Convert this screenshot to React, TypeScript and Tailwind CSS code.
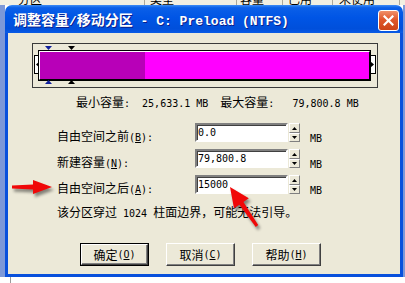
import React from "react";

const CJK = /[\u2E80-\u9FFF\u3000-\u303F\uFF00-\uFFEF]/;

// split a string into CJK / latin runs so each can get its own font and size
const Mixed = ({ text, title }: { text: string; title?: boolean }) => {
  const runs: { s: string; c: boolean }[] = [];
  for (const ch of text) {
    const c = CJK.test(ch);
    const last = runs[runs.length - 1];
    if (last && last.c === c) last.s += ch;
    else runs.push({ s: ch, c });
  }
  return (
    <>
      {runs.map((r, i) => (
        <span
          key={i}
          className={
            r.c
              ? title
                ? "font-['Noto_Sans_CJK_SC',sans-serif] text-[14px]"
                : "font-['Noto_Sans_CJK_SC',sans-serif] text-[12px]"
              : title
                ? "font-['Liberation_Mono',monospace] text-[13px]"
                : "font-['DejaVu_Sans_Mono',monospace] text-[10px]"
          }
        >
          {r.s}
        </span>
      ))}
    </>
  );
};

const Acc = ({ k }: { k: string }) => (
  <span className="font-['DejaVu_Sans_Mono',monospace] text-[10px]">
    (<u>{k}</u>)
  </span>
);

const Marker = ({ color, up }: { color: string; up?: boolean }) => (
  <svg width="7" height="4" viewBox="0 0 7 4">
    <polygon points={up ? "3.5,0 7,4 0,4" : "0,0 7,0 3.5,4"} fill={color} />
  </svg>
);

const Spinner = () => (
  <div className="ml-[1px] flex w-[11px] flex-col">
    <div className="flex h-[10px] items-center justify-center border border-t-white border-l-white border-b-[#808080] border-r-[#808080] bg-[#ECE9D8]">
      <svg width="5" height="3" viewBox="0 0 5 3">
        <polygon points="2.5,0 5,3 0,3" fill="#000" />
      </svg>
    </div>
    <div className="flex h-[9px] items-center justify-center border border-t-white border-l-white border-b-[#808080] border-r-[#808080] bg-[#ECE9D8]">
      <svg width="5" height="3" viewBox="0 0 5 3">
        <polygon points="0,0 5,0 2.5,3" fill="#000" />
      </svg>
    </div>
  </div>
);

const Row = ({ label, acc, value }: { label: string; acc: string; value: string }) => (
  <div className="flex h-[19px] items-start pl-[49px]">
    <div className="mt-[6px] w-[138px] leading-[12px] whitespace-pre">
      <Mixed text={label} />
      <Acc k={acc} />
      <Mixed text=":" />
    </div>
    <div className="flex h-[19px] w-[93px] items-center border-2 border-t-[#808080] border-l-[#808080] border-b-white border-r-white bg-white pl-[1px] shadow-[inset_1px_1px_0_#404040] leading-[12px]">
      <Mixed text={value} />
    </div>
    <Spinner />
    <div className="mt-[7px] ml-[10px] leading-[12px]">
      <Mixed text="MB" />
    </div>
  </div>
);

const Btn = ({ label, acc, def }: { label: string; acc: string; def?: boolean }) => (
  <div className={def ? "h-[23px] w-[69px] border border-black" : "h-[23px] w-[69px]"}>
    <div className="flex h-full w-full items-center justify-center border border-t-white border-l-white border-b-[#404040] border-r-[#404040] bg-[#ECE9D8] leading-[12px] shadow-[inset_-1px_-1px_0_#808080]">
      <Mixed text={label} />
      <Acc k={acc} />
    </div>
  </div>
);

const headers = [
  { t: "分区", w: "w-[145px]", p: "pl-[18px]" },
  { t: "类型", w: "w-[92px]", p: "pl-[5px]" },
  { t: "容量", w: "w-[46px]", p: "pl-[3px]" },
  { t: "已用", w: "w-[50px]", p: "pl-[5px]" },
  { t: "未使用", w: "w-[67px]", p: "pl-[6px]" },
];

export default function App() {
  return (
    <div className="relative flex h-[283px] w-[405px] flex-col overflow-hidden bg-white text-black">
      {/* list header of the window behind */}
      <div className="flex h-[5px] overflow-hidden bg-[#F1EFE2]">
        {headers.map((h) => (
          <div key={h.t} className={`${h.w} ${h.p} shrink-0 border-r border-[#ACA899]`}>
            <div className="-mt-[8px] leading-[12px]">
              <Mixed text={h.t} />
            </div>
          </div>
        ))}
      </div>

      <div className="flex h-[272px]">
        <div className="w-[5px] bg-[#7C98D8]" />

        {/* dialog */}
        <div className="flex w-[398px] flex-col">
          <div className="flex h-[28px] items-start justify-between rounded-t-[7px] bg-[linear-gradient(to_bottom,#3d8cf5_0%,#0a5fe8_10%,#0055e5_45%,#004fdb_85%,#0a5ce6_100%)] pl-[8px] pr-[4px]">
            <div className="mt-[7px] font-bold leading-[15px] whitespace-pre text-white [text-shadow:1px_1px_#0a1e8c]">
              <Mixed title text="调整容量/移动分区 - C: Preload (NTFS)" />
            </div>
            <div className="mt-[5px] flex h-[21px] w-[21px] items-center justify-center rounded-[3px] border border-white bg-[linear-gradient(to_bottom,#f0906a_0%,#e0582c_45%,#cc4418_100%)]">
              <svg width="11" height="11" viewBox="0 0 11 11">
                <path d="M1.5 1.5 L9.5 9.5 M9.5 1.5 L1.5 9.5" stroke="#fff" strokeWidth="2.2" strokeLinecap="square" />
              </svg>
            </div>
          </div>

          <div className="flex h-[244px] flex-col border-x-[3px] border-b-[3px] border-[#0850DC] bg-[#ECE9D8]">
            {/* partition map */}
            <div className="relative mt-[10px] ml-[24px] flex h-[45px] w-[346px] items-center border border-[#3a3a3a] pl-[5px]">
              <div className="absolute top-[11px] left-[1px] flex h-[19px] w-[7px] items-center border border-black bg-white pl-[1px]">
                <svg width="4" height="7" viewBox="0 0 4 7">
                  <polygon points="4,0 4,7 0,3.5" fill="#000" />
                </svg>
              </div>
              <div className="absolute top-[11px] right-[1px] flex h-[19px] w-[7px] items-center justify-end border border-black bg-white pr-[1px]">
                <svg width="4" height="7" viewBox="0 0 4 7">
                  <polygon points="0,0 0,7 4,3.5" fill="#000" />
                </svg>
              </div>
              <div className="relative h-[31px] w-[333px] border border-black">
                <div className="flex h-full w-full border-t border-l border-t-white border-l-white border-b border-r border-b-black border-r-black">
                  <div className="w-[105px] bg-[#B800B8]" />
                  <div className="flex-1 bg-[#FF00FF]" />
                </div>
              </div>
              <div className="absolute top-[2px] left-[12px] flex">
                <Marker color="#10209C" />
              </div>
              <div className="absolute top-[2px] left-[35px] flex">
                <Marker color="#000" />
              </div>
              <div className="absolute bottom-[3px] left-[12px] flex">
                <Marker color="#10209C" up />
              </div>
              <div className="absolute bottom-[3px] left-[35px] flex">
                <Marker color="#000" up />
              </div>
            </div>

            <div className="mt-[7px] h-[12px] pl-[68px] leading-[12px] whitespace-pre">
              <Mixed text="最小容量:  25,633.1 MB  最大容量:   79,800.8 MB" />
            </div>

            <div className="mt-[16px] flex flex-col gap-[7px]">
              <Row label="自由空间之前" acc="B" value="0.0" />
              <Row label="新建容量" acc="N" value="79,800.8" />
              <Row label="自由空间之后" acc="A" value="15000" />
            </div>

            <div className="mt-[11px] h-[12px] pl-[49px] leading-[12px] whitespace-pre">
              <Mixed text="该分区穿过 1024 柱面边界，可能无法引导。" />
            </div>

            <div className="mt-[26px] flex gap-[17px] pl-[72px]">
              <Btn label="确定" acc="O" def />
              <Btn label="取消" acc="C" />
              <Btn label="帮助" acc="H" />
            </div>
          </div>
        </div>

        <div className="w-[2px] bg-[#7C98D8]" />
      </div>

      <div className="flex h-[6px] bg-white pl-[10px]">
        <div className="w-[1px] bg-[#9a9a9a]" />
      </div>

      {/* red annotation arrows */}
      <svg
        className="absolute top-[178px] left-[9px] drop-shadow-[2px_3px_1.5px_rgba(0,0,0,0.45)]"
        width="46"
        height="18"
        viewBox="0 0 46 18"
      >
        <polygon points="3,7.5 24,6.5 24,2 43,9 24,16 24,11.5 3,10.5" fill="#F00808" />
      </svg>
      <svg
        className="absolute top-[182px] left-[222px] drop-shadow-[2px_3px_1.5px_rgba(0,0,0,0.45)]"
        width="44"
        height="50"
        viewBox="0 0 44 50"
      >
        <polygon
          points="8,5 26.8,16.3 21.45,20 36.2,43 33.8,45 17.35,22.8 12,26.5"
          fill="#F00808"
        />
      </svg>
    </div>
  );
}
